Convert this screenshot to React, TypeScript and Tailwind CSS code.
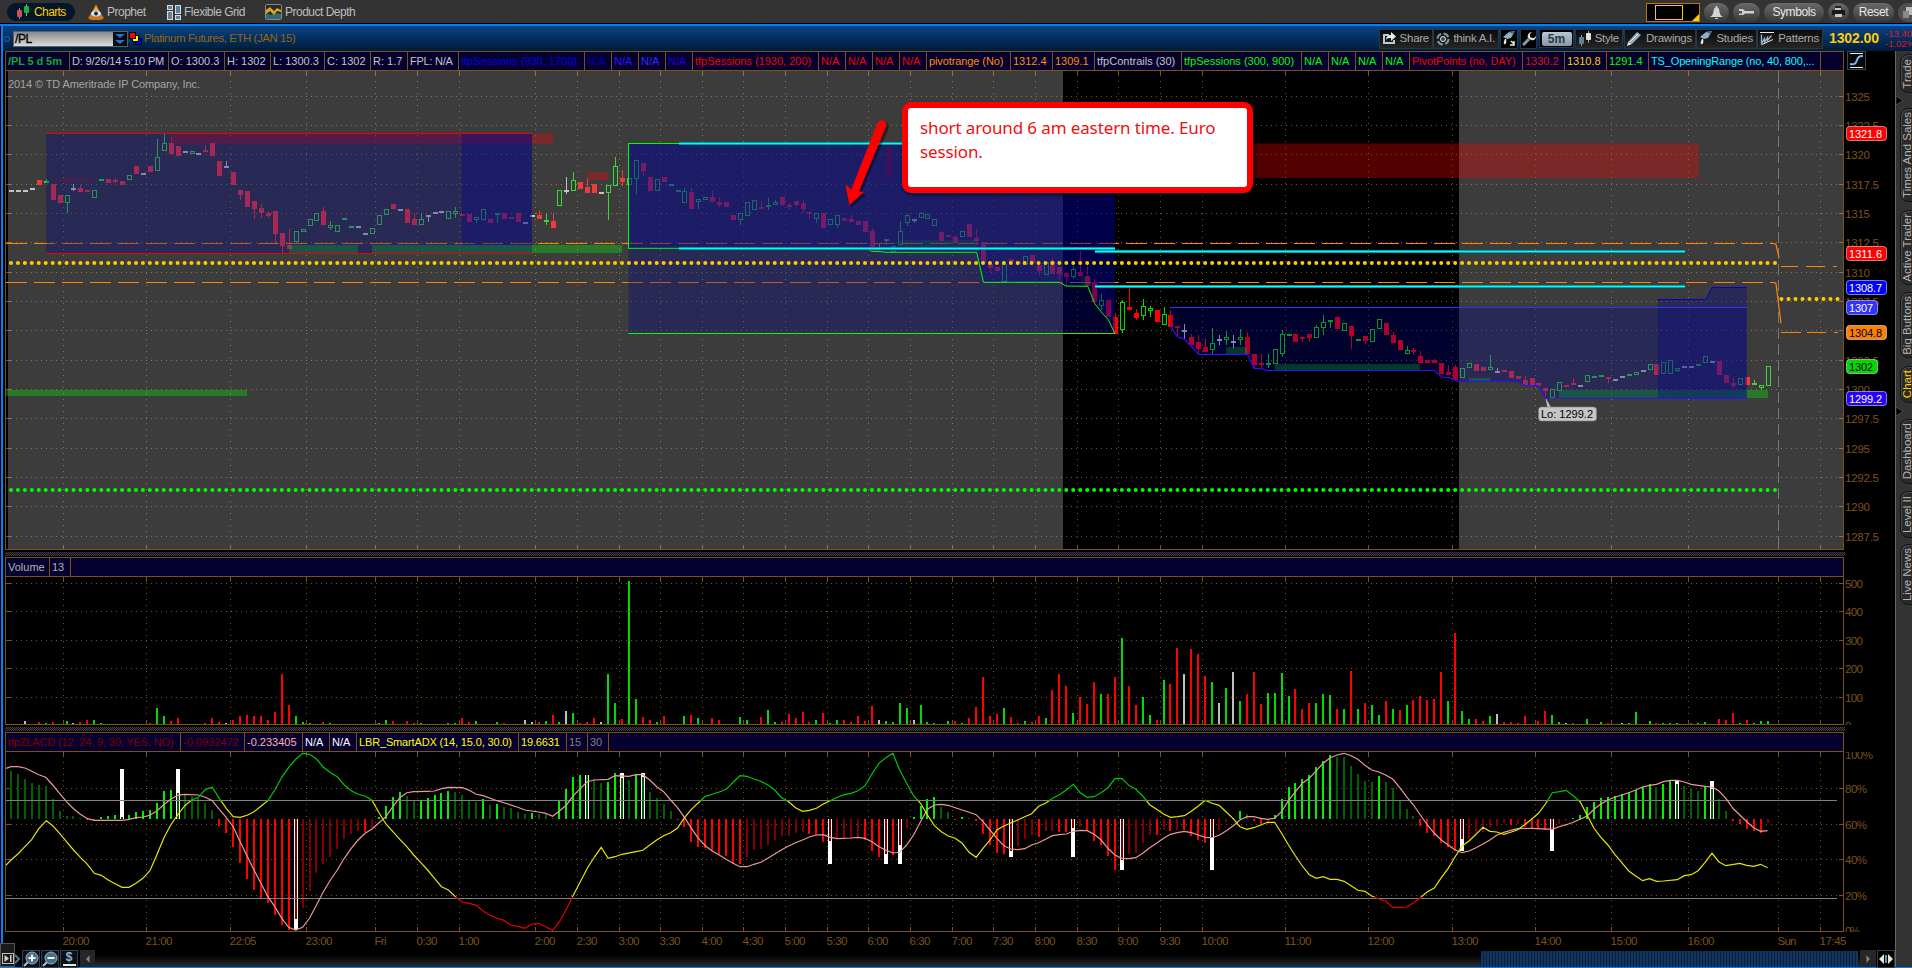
import type { ReactNode } from "react";
import { ChevronLeft, ChevronRight } from "lucide-react";

// ---------------------------------------------------------------------------
// Data. Vertical values are kept in thirds of a pixel.
// ---------------------------------------------------------------------------

// one bar per entry: kind, body top, body bottom, [high], [low]
// kinds: r = down, g = up, n = unchanged
const CANDLES = `n 571 576;n 571 576;n 571 576;n 565 570;r 540 555;g 543 549 536;r 552 600;r 585 609;g 585 609 585 639;n 565 570 552 572;
r 564 576 555;r 570 576;g 570 594;g 538 545;r 538 549;r 540 545 534 549;r 543 555;g 526 540;r 498 522;n 519 524;
r 498 516;g 471 513 417;g 429 452 402;r 429 462 411;r 438 468;n 453 458;g 454 464;n 459 464;r 450 456 434;r 429 468;
r 483 528;n 497 503 483;r 516 555;r 570 585 570 600;r 573 621;r 603 627 603 657;r 624 639 612 654;r 639 648 634 654;r 633 702 633 729;r 699 738 699 760;
r 735 747 687;g 693 726;g 688 696;g 657 678;g 639 663;r 633 675 621;g 676 686 664 690;g 675 696;g 655 660;g 677 682;
n 679 684;n 700 705;g 684 702;g 645 675;g 627 645;r 612 627;n 627 632;r 627 669;r 657 675 639;g 657 675 639;
n 645 650 645 666;n 636 641;n 634 639;g 633 657;g 634 642 621 654;r 642 647;r 642 666;g 651 660 651 669;g 627 660;r 657 668;
g 639 644 639 669;r 639 657;r 651 657;r 639 666;n 666 671;n 645 650;r 645 657 633;g 660 666 642 675;r 663 684 639;g 570 618;
n 570 575 531 582;g 540 573 516;r 546 567;r 561 579 534;r 552 579;n 576 581;g 555 579 555 660;g 498 558 471;r 534 546 510 558;g 534 555;
g 480 537 480 582;r 489 513 489 528;r 531 573;g 537 573;r 531 546;g 553 558;g 570 576;g 573 609 564;r 576 627 564;g 597 606 597 627;
g 591 600;r 591 606 570;r 606 615 591 621;r 606 621;r 645 660;g 639 660 639 675;g 606 648;g 600 630;r 621 627 603;g 615 622 594 630;
g 606 615 600;r 591 615;r 615 621 609 630;r 603 615 603 622;r 609 627 600 639;r 636 642 636 657;g 639 657 639 669;r 639 684;g 657 675;g 645 675 645 684;
r 654 663;r 657 665 645;r 663 675;r 663 696;r 693 747 684;n 745 750 732;g 717 722 717 735;g 738 756;g 693 735 663;g 645 669 642 678;
n 658 663 658 669;g 639 654 636;g 642 657;g 657 678;r 696 723;r 705 711;r 711 729 705;g 693 711;r 672 711;r 714 723 687 735;
r 726 789;r 792 804 792 819;r 801 813;g 792 846;r 777 787;r 783 792;g 768 795;r 765 789;r 795 813 795 825;g 786 825;
r 783 822 774;r 801 822 801 840;r 819 831 819 858;g 807 831 798 837;r 816 828 753;r 828 858 795;r 846 906 837;g 900 918 882 930;r 900 951;r 951 1001 939;
g 906 990 900 999;r 921 930 861;r 939 954 927 960;g 918 948 897 960;g 924 932 918 950;r 930 966;g 942 974 921;r 945 981 930;r 978 984 978 1010;n 991 996 972 1017;
r 1011 1035 1002;r 1026 1047 1005 1060;r 1041 1056 1013;g 1029 1050 984 1062;n 1018 1023 1006 1036;g 1011 1020 994 1035;n 1023 1028 1005 1044;g 1011 1020 987 1035;r 1011 1062 996;r 1062 1095 1062 1105;
r 1089 1096 1062 1105;g 1090 1096 1062 1105;g 1047 1092;g 1002 1062 990 1071;g 1002 1007;r 1002 1026;r 1011 1017 1011 1026;r 1002 1014 1002 1026;g 981 1014 975;g 966 984 945 1005;
g 960 966 960 984;r 951 987;g 969 993;r 978 1008 978 1047;g 1017 1022;r 1008 1023 1008 1032;g 987 1026;g 957 987;r 969 1006;r 1005 1029 996;
r 1020 1050;g 1050 1062 1038;r 1050 1057 1044 1066;r 1068 1089 1053;r 1080 1090;r 1080 1090 1077;r 1089 1122;r 1116 1126 1095;r 1101 1140 1095;g 1104 1134;
g 1090 1104;r 1092 1113;r 1101 1113;g 1101 1111 1065;n 1112 1117 1105 1120;r 1110 1116;r 1113 1134;r 1128 1138;r 1140 1155 1128;r 1134 1155;
r 1149 1158;r 1164 1173 1164 1190;g 1167 1194;g 1147 1173;r 1155 1160;r 1149 1155 1134;n 1155 1160;g 1125 1146;g 1127 1134;g 1125 1132;
r 1130 1135 1130 1150;n 1136 1140;n 1128 1133;g 1123 1130;g 1116 1125;n 1110 1115;g 1093 1112;r 1092 1125;g 1086 1122;g 1080 1123;
g 1104 1112 1104 1116;n 1099 1104;n 1098 1103;g 1092 1099;g 1069 1090;n 1083 1088;r 1083 1125;r 1125 1149;r 1149 1157 1135 1168;g 1134 1155;
r 1131 1155;g 1149 1155 1140;g 1155 1163 1155 1170;g 1098 1157`
  .split(";")
  .map((row) => {
    const [kind, ...v] = row.trim().split(" ");
    const [top, bottom, high = top, low = bottom] = v.map(Number);
    return { kind, top, bottom, high, low };
  });

// bar index + kind + height
const VOLUME = `2n8 4r7 5g4 6r7 8g10 9n4 10r7 11r13 12g13 13g4 20r4 21g49 22g25 23r10 24r19 28r4 29r19 30r7 31n4 32r13 33r25 34r28 35r25 36r25 37r13
38r37 39r151 40r58 41g25 42g7 43g4 45r7 46g4 53g4 54g13 55r10 57r10 58r4 59g4 63g4 64g4 65r19 66r7 67g10 70g7 71r4 74n13 75n7 76r7 77g10 78r28
79g7 80n40 81g34 82r4 83r7 84r19 85n7 86g151 87g64 88r16 89g430 90g76 91r22 92r13 93g7 94r25 97g25 98r28 99g19 101r19 102r13 105g22 106g13
108r22 109g43 110g7 111r7 112r31 113r19 114r37 115r7 116g13 117r34 118g4 119g13 120r13 121r7 122r25 123r10 124r55 125n13 126g10 127g7 128g64
129g49 130n13 131g58 132g7 133g4 135g10 136r10 137g4 138r19 139r52 140r142 141r25 142r31 143g49 144r22 145r4 146g10 147r7 148r25 149g19
150r103 151r151 152r115 153g34 154r82 155r61 156r127 157g91 158r91 159r142 160g259 161r115 162r58 163g82 164g28 165r13 166g133 167r121
168r229 169n151 170r226 171r211 172r145 173g127 174n64 175g109 176n157 177g70 178r91 179r157 180r61 181g94 182g94 183g154 184g85 185r106
186r46 187r64 188g64 189g91 190g88 191r46 192g46 193r160 194g46 195r64 196g58 197g28 198r70 199g46 200r43 201g58 202r73 203r85 204r73 205r76
206r157 207g70 208r274 209g40 210g16 211r16 212r10 213g25 214n31 215r7 216r7 217r4 218r25 220r10 221r40 222g28 223g7 224n4 225r4 227g16
229g7 230r4 232n4 233g4 234g37 236g10 237r4 238g4 239g4 240g4 242r4 243g4 244g7 246r16 247r13 248r34 249g4 250r13 251g4 252g10 253g10`
  .split(/\s+/)
  .map((s) => {
    const m = s.match(/(\d+)([rgn])(\d+)/)!;
    return { i: +m[1], kind: m[2], h: +m[3] };
  });

const HIST = [
  144, 135, 120, 108, 102, 99, 60, 24, 9, 8, 2, -3, -6, 6, 9, 12, 6, 12, 21, 24, 27, 48, 84, 87, 78, 72, 70, 64, 48, 27,
  -21, -42, -84, -132, -180, -213, -237, -252, -288, -318, -333, -300, -267, -216, -162, -135, -114, -90, -60, -45, -36,
  -38, -27, 5, 39, 66, 81, 69, 54, 56, 63, 72, 78, 84, 81, 72, 54, 51, 60, 42, 45, 36, 33, 21, 15, 18, 15, 14, 2, 54, 90,
  126, 132, 131, 120, 108, 111, 138, 123, 117, 135, 126, 81, 63, 45, 24, -3, -24, -69, -84, -87, -96, -105, -110, -135,
  -136, -114, -93, -90, -78, -63, -51, -50, -42, -39, -44, -48, -69, -66, -60, -57, -56, -55, -63, -96, -114, -105, -108,
  -78, -27, 6, 39, 60, 66, 36, 21, -3, 6, 3, -6, -45, -78, -102, -105, -96, -81, -60, -48, -54, -36, -35, -38, -39, -27,
  -24, -36, -66, -78, -111, -153, -123, -105, -102, -72, -48, -49, -33, -36, -33, -34, -51, -63, -72, -57, -33, -9, 3, 24,
  15, -6, -16, -15, 12, 60, 96, 108, 120, 132, 156, 174, 192, 187, 186, 159, 135, 114, 111, 129, 111, 93, 57, 30, 9, -21,
  -42, -51, -72, -84, -96, -60, -59, -42, -40, -24, -21, -12, -18, -15, -24, -27, -29, -32, -30, -15, -6, 3, 12, 36, 51,
  63, 66, 69, 75, 81, 87, 96, 105, 96, 105, 114, 105, 99, 93, 84, 96, 90, 60, 24, -6, -15, -30, -36, -42, -12,
];

// white marker bars behind the histogram
const MARKERS: [number, number][] = [
  [16, 150], [24, 150], [41, -333], [83, 132], [88, 138], [91, 138], [118, -135], [126, -135], [128, -135],
  [144, -114], [153, -114], [160, -153], [173, -153], [209, -96], [222, -96], [240, 114], [245, 114],
];

const SIGNAL = `-0.8 716 0 710 1 710 2 714 3 724 4 734 5 742 6 765 7 790 8 815 9 836 10 853 11 866 12 871 16 871 17 868 18 863 19 861 20 856 21 843 22 824 23 808 24 796 25 793 27 795 28 802 29 812 30 838 31 862 32 890 33 935 34 978 35 1020 36 1060 37 1100 38 1130 39 1165 40 1192 41 1200 42 1192 43 1165 44 1125 45 1085 46 1050 47 1020 48 985 49 955 50 930 51 910 52 897 53 878 54 860 55 830 56 803 57 788 58 785 60 784 61 783 62 776 63 772 65 773 66 781 67 793 68 797 70 812 71 818 73 832 74 840 76 846 77 850 78 859 79 843 80 825 81 797 82 775 83 755 84 750 86 748 87 737 89 739 90 734 91 734 92 750 93 770 94 785 95 810 96 833 97 862 98 895 99 925 100 947 101 963 102 975 103 988 104 1000 105 1010 106 1010 107 1003 108 997 109 985 110 972 111 959 112 948 113 938 114 930 115 921 116 915 117 914 118 922 119 926 121 924 122 922 123 925 124 935 125 950 126 960 127 969 128 967 129 945 130 915 131 875 132 838 133 825 134 823 135 826 136 833 137 840 138 847 139 854 140 875 141 900 142 925 143 947 144 957 145 959 146 956 147 945 148 938 149 928 150 917 151 914 152 912 153 904 154 901 155 902 156 913 157 930 158 955 159 975 160 985 161 986 162 983 163 970 164 953 165 940 166 925 167 913 168 908 169 904 170 908 171 915 172 922 173 923 174 916 175 903 176 888 177 870 178 860 179 860 180 865 181 868 182 865 183 845 184 812 185 785 186 760 187 745 188 722 189 700 190 683 191 675 192 670 193 677 194 688 195 706 196 720 197 726 198 735 199 747 200 772 201 800 202 825 203 855 204 885 205 910 206 930 207 945 208 960 209 968 210 963 211 953 212 942 213 930 214 916 215 907 216 901 217 896 219 895 222 898 223 890 224 884 225 877 226 868 227 858 228 838 229 822 230 810 231 802 233 788 234 780 235 771 236 766 237 763 238 755 239 751 240 751 241 756 242 763 243 766 244 769 245 771 246 783 247 805 248 835 249 855 250 875 251 893 252 904 253 902`;

const ADX = `-0.8 1007 0 990 1 972 2 950 3 928 4 896 5.1 872 6 887 7 910 8 935 9 960 10 982 11 1003 12 1030 13 1036 14 1050 15 1061 16 1072 17 1072 18 1060 19 1045 20 1022 21 975 22 925 23 885 24 855 25 828 26 810 27 802 28 778 29 772 30 805 31 835 32 860 33 862 34 856 35 845 36 829 37 812 38 780 39 742 40 712 41 688 42 670 43 673 44 687 45 712 46 728 47 740 48 765 49 782 50 793 51 798 52 811 53 848 54 882 55 905 56 928 57 950 58 975 59 997 60 1020 61 1045 62 1070 63 1080 64 1100 65 1117 66 1120 67 1126 68 1143 69 1156 70 1165 71 1171 72 1186 73 1189 74 1195 75 1183 76 1180 77 1190 78 1201 79 1175 80 1138 81 1095 82 1055 83 1015 84 982 85 952 86 985 87 980 88 973 90 965 91 961 92 945 93 930 94 917 95 908 96 894 97 863 98 838 99 818 100 799 101 793 102 786 103 778 104 757 105 737 106 739 107 747 108 754 109 765 110 780 111 803 112 815 113 833 114 844 115 841 116 835 117 822 118 812 119 802 120 794 121 790 122 782 123 767 124 732 125 700 126 683 127 670 128 720 129 760 130 797 131 820 132 855 133 887 134 905 135 918 136 925 137 940 138 967 139 982 140 955 141 930 142 900 143 888 144 879 145 870 146 860 147 851 148 829 149 820 150 805 151 794 152 780 153 763 154 788 155 802 156 800 157 788 158 773 159 746 160 745 161 766 162 778 163 798 164 824 165 838 166 852 167 862 168 860 169 857 170 844 171 828 172 811 173 820 174 826 175 845 176 865 177 890 178 898 179 893 180 885 181 877 182 877 183 910 184 945 185 978 186 1008 187 1034 188 1045 189 1040 190 1048 191 1048 192 1054 193 1067 194 1081 195 1084 196 1098 197 1107 198 1113 199 1132 200 1132 201 1131 202 1118 203 1103 204 1085 205 1074 206 1043 207 1015 208 980 209 948 210 933 211 913 212 892 213 904 214 906 215 913 216 907 217 899 218 884 219 868 220 850 221 822 222 788 223 785 224 781 225 797 226 815 227 855 228 895 229 922 230 945 231 973 232 998 233 1023 234 1038 235 1052 236 1046 237 1054 238 1053 240 1049 241 1037 242 1034 243 1022 244 997 245 970 246 996 247 1007 249 1000 250 1006 251 1009 252 1003 253 1013`;

const TIMES: [number, string][] = [
  [63, "20:00"], [146, "21:00"], [230, "22:05"], [306, "23:00"], [375, "Fri"], [417, "0:30"], [459, "1:00"],
  [535, "2:00"], [577, "2:30"], [619, "3:00"], [660, "3:30"], [702, "4:00"], [743, "4:30"], [785, "5:00"],
  [827, "5:30"], [868, "6:00"], [910, "6:30"], [952, "7:00"], [993, "7:30"], [1035, "8:00"], [1077, "8:30"],
  [1118, "9:00"], [1160, "9:30"], [1202, "10:00"], [1285, "11:00"], [1368, "12:00"], [1452, "13:00"],
  [1535, "14:00"], [1611, "15:00"], [1688, "16:00"], [1778, "Sun"], [1820, "17:45"],
];

const PRICES: [number, string][] = [
  [96, "1325"], [125, "1322.5"], [154, "1320"], [184, "1317.5"], [213, "1315"], [242, "1312.5"], [272, "1310"],
  [301, "1307.5"], [330, "1305"], [360, "1302.5"], [389, "1300"], [418, "1297.5"], [448, "1295"], [477, "1292.5"],
  [506, "1290"], [536, "1287.5"],
];

const BROWN = "#7d5219";
const KIND: Record<string, string> = { r: "#ff0000", g: "#00dc00", n: "#c0c0c0" };
const barX = (i: number) => 11 + 6.943 * i;

const toPoints = (s: string) => {
  const n = s.split(" ").map(Number);
  const out: string[] = [];
  for (let k = 0; k < n.length; k += 2) out.push(`${barX(n[k]).toFixed(1)},${(530 + n[k + 1] / 3).toFixed(1)}`);
  return out.join(" ");
};

// ---------------------------------------------------------------------------
// Charts
// ---------------------------------------------------------------------------

function Grid({ top, bottom, rows, sunday }: { top: number; bottom: number; rows: number[]; sunday?: boolean }) {
  return (
    <g shapeRendering="crispEdges" stroke={BROWN} fill="none">
      {rows.map((y) => (
        <g key={y}>
          <path d={`M6 ${y + 0.5}H1838`} strokeDasharray="1 4" />
          <path d={`M6 ${y + 0.5}h5M1839 ${y + 0.5}h4`} />
        </g>
      ))}
      {TIMES.map(([x]) => (
        <g key={x}>
          {!(sunday && x === 1778) && <path d={`M${x + 0.5} ${top + 10}V${bottom - 6}`} strokeDasharray="1 5" />}
          <path d={`M${x + 0.5} ${top}v5M${x + 0.5} ${bottom}v-4`} />
        </g>
      ))}
    </g>
  );
}

function Frame({ top, bottom }: { top: number; bottom: number }) {
  return (
    <path d={`M5.5 ${top}V${bottom + 0.5}H1843.5V${top}`} stroke={BROWN} fill="none" shapeRendering="crispEdges" />
  );
}

function PriceTag({ y, text, fill, color = "#fff" }: { y: number; text: string; fill: string; color?: string }) {
  const w = text.length > 4 ? 40 : 31;
  return (
    <g>
      <rect x="1846.5" y={y - 7} width={w} height="14" rx="3" fill={fill} stroke="#ffffff" strokeOpacity=".5" />
      <text x="1849" y={y + 4} fill={color} textLength={w - 7} fontSize="11">
        {text}
      </text>
    </g>
  );
}

const CONTOUR_A =
  "628,248.3 867,248.3 871.5,251.3 881,251.7 886,252.3 976.7,252.3 983.5,282.3 1059.6,282.3 1066,286 1087.8,286.3 1094.6,303.3 1101.3,312 1108.5,320 1114.8,333.3";
const CONTOUR_B =
  "1170.3,326 1177.4,336.7 1184.4,339 1198.6,354.3 1247.5,354.3 1254,368.3 1261,368.7 1267.6,370.5 1434.4,370.5 1441.4,377 1449,377.7 1457.7,381.5 1517.5,381.5 1524.6,385.3 1538.2,385.7 1545.2,398 1746.8,398.5";

function PriceChart() {
  const blue = "rgba(0,0,146,.3)";
  return (
    <svg className="block" width="1892" height="479" viewBox="3 71 1892 479" fontFamily="Liberation Sans, Arial, sans-serif">
      <rect x="3" y="71" width="1892" height="479" fill="#000" />
      <Grid top={71} bottom={549} rows={PRICES.map((p) => p[0])} sunday />
      <path d="M1778.5 72V549" stroke="#565656" strokeDasharray="11 5" shapeRendering="crispEdges" />

      <g shapeRendering="crispEdges">
        {CANDLES.map((c, i) => {
          const x = Math.round(barX(i));
          const top = Math.round(c.top / 3);
          const h = Math.max(2, Math.round((c.bottom - c.top) / 3));
          const color = KIND[c.kind];
          const hollow = c.kind === "g" && h > 2;
          return (
            <g key={i}>
              {c.high < c.top && <rect x={x} y={c.high / 3} width="1" height={top - c.high / 3} fill={color} />}
              {c.low > c.bottom && <rect x={x} y={top + h} width="1" height={c.low / 3 - top - h} fill={color} />}
              {hollow ? (
                <rect x={x - 1.5} y={top + 0.5} width="4" height={h - 1} fill="none" stroke={color} />
              ) : (
                <rect x={x - 2} y={top} width="5" height={h} fill={color} />
              )}
            </g>
          );
        })}
      </g>

      {/* extended hours shading */}
      <g fill="rgba(200,200,200,.3)" shapeRendering="crispEdges">
        <rect x="8" y="71" width="1055" height="479" />
        <rect x="1459" y="71" width="385" height="479" />
      </g>

      {/* supply and demand zones */}
      <g fill="rgba(255,0,0,.32)">
        <rect x="171" y="133.5" width="382" height="10" />
        <rect x="53" y="179" width="41" height="2" />
        <rect x="587" y="172" width="21" height="8" />
        <rect x="886" y="145" width="6" height="33" />
        <rect x="1000" y="143.5" width="698.5" height="34.5" />
      </g>
      <g fill="rgba(0,255,0,.32)">
        <rect x="289" y="245" width="69" height="8" />
        <rect x="372" y="245" width="250" height="8" />
        <rect x="899" y="240" width="78" height="8" fillOpacity=".6" />
        <rect x="1081" y="276" width="10" height="10" fillOpacity=".6" />
        <rect x="1226" y="347" width="21" height="7" />
        <rect x="1275" y="364" width="145" height="6" />
        <rect x="1469" y="378" width="21" height="3" />
        <rect x="1559" y="390" width="209" height="8" />
        <rect x="6" y="390" width="241" height="6" />
      </g>

      <g fill="none" stroke="#ff8400" strokeWidth="1.2">
        <path d="M6 243.5H1775M6 282.5H1775" strokeDasharray="21 7" />
        <path d="M1774 243.5l2 1l3 13M1774 282.5l2 1l5 40M1781 266.5h17m8 0h19m8 0h4M1781 332.5h20m6 0h19m8 0h4" />
      </g>

      {/* session boxes */}
      <g fill={blue}>
        <rect x="46" y="133.5" width="486" height="120" />
        <rect x="462" y="134" width="70" height="111" />
        <rect x="628.5" y="143.5" width="486.5" height="190" />
        <polygon points={`628,143.5 ${CONTOUR_A} 1114.8,143.5`} />
        <polygon points={`1170.3,307.5 ${CONTOUR_B} 1746.8,307.5`} />
        <polygon points="1657.7,299.3 1706,299.3 1711.9,287.3 1746.8,287.3 1746.8,398 1657.7,398" />
      </g>
      <path d="M46 133.5H532M46 253.5H532" stroke="#f00000" shapeRendering="crispEdges" />
      <g fill="none" stroke="#00ff00">
        <path d="M680 143.5H628.5V248.5" />
        <path d="M628.5 333.5H1115" />
        <polyline points={CONTOUR_A} />
      </g>
      <g fill="none">
        <path d="M1170 307.5H1746.8" stroke="#3232ff" />
        <polyline points={CONTOUR_B} stroke="#2a10ff" strokeWidth="1.2" />
        <polyline points="1657.7,299.5 1706,299.5 1711.9,287.5 1746.8,287.5" stroke="#0000d0" />
      </g>
      <g fill="none" shapeRendering="crispEdges">
        <path d="M679 143.5H1000M679 248.5H1115M1095 251.5H1684.5M1095 286.5H1684.5" stroke="#00a0a8" strokeWidth="3" />
        <path d="M679 143.5H1000M679 248.5H1115M1095 251.5H1684.5M1095 286.5H1684.5" stroke="#00ffff" />
      </g>

      {CANDLES.map((_, i) => (
        <g key={i}>
          <ellipse cx={barX(i)} cy="263" rx="2" ry="2.1" fill="#ffcc00" />
          <ellipse cx={barX(i)} cy="490" rx="2" ry="2.1" fill="#00ff00" />
        </g>
      ))}
      <circle cx="1775" cy="263" r="2" fill="#ffcc00" />
      <circle cx="1775" cy="490" r="2" fill="#00ff00" />
      {[0, 1, 2, 3, 4, 5, 6, 7, 8].map((i) => (
        <circle key={i} cx={1781.5 + i * 7} cy="299" r="2" fill="#ffcc00" />
      ))}
      <Frame top={71} bottom={549} />
      <text x="8" y="87.5" fill="#a4a4a4" fontSize="11" textLength="192">
        2014 © TD Ameritrade IP Company, Inc.
      </text>

      {PRICES.map(([y, t]) => (
        <text key={t} x="1845" y={y + 5} fill={BROWN} fontSize="11.5" textLength={t.length > 4 ? 34 : 25}>
          {t}
        </text>
      ))}
      <PriceTag y={133.5} text="1321.8" fill="#ff0000" />
      <PriceTag y={253.5} text="1311.6" fill="#ff0000" />
      <PriceTag y={287.5} text="1308.7" fill="#0000ff" />
      <PriceTag y={307.5} text="1307" fill="#3232ff" />
      <PriceTag y={332.5} text="1304.8" fill="#ff8000" color="#000" />
      <PriceTag y={366.5} text="1302" fill="#00d800" color="#000" />
      <PriceTag y={398.5} text="1299.2" fill="#2800ff" />

      {/* low bubble */}
      <path d="M1546 399l4.5 8h-3z" fill="#c4c4c4" stroke="#c4c4c4" strokeWidth=".5" />
      <rect x="1538.5" y="407" width="58" height="14" rx="3" fill="#c6c6c6" stroke="#808080" strokeWidth=".6" />
      <text x="1541" y="418" fontSize="11" fill="#000" textLength="52">
        Lo: 1299.2
      </text>

      {/* arrow */}
      <path
        d="M878 123q3-5 8 -1q1.500 2 .5 5L859 191.500l5 1l-14.500 13l-4-19.500l6 5z"
        fill="#000"
        opacity=".4"
        transform="translate(2 2)"
      />
      <path d="M877.500 123q3-4.500 7.500 -1.500q2 2 1 5L859 191.500l5 .500l-14.500 13l-4-19.500q3 0 5.500 4.500z" fill="#ff0000" />
    </svg>
  );
}

function VolumeChart() {
  return (
    <svg className="block" width="1892" height="148" viewBox="3 577 1892 148" fontFamily="Liberation Sans, Arial, sans-serif">
      <Grid top={577} bottom={724} rows={[583, 611, 640, 668, 697]} />
      <g shapeRendering="crispEdges">
        {VOLUME.map(({ i, kind, h }) => (
          <rect key={i} x={Math.round(barX(i)) - 1} y={724 - Math.round(h / 3)} width="2" height={Math.round(h / 3)} fill={KIND[kind]} />
        ))}
      </g>
      <Frame top={577} bottom={724} />
      {[500, 400, 300, 200, 100, 0].map((v, k) => (
        <text key={v} x="1845" y={[588, 616, 645, 673, 702, 730][k]} fill={BROWN} fontSize="11.5" textLength={v ? 18 : 6}>
          {v}
        </text>
      ))}
    </svg>
  );
}

function OscillatorChart() {
  const zero = 819;
  const adx = toPoints(ADX);
  return (
    <svg className="block" width="1892" height="198" viewBox="3 752 1892 198" fontFamily="Liberation Sans, Arial, sans-serif">
      <defs>
        <clipPath id="hi"><rect x="6" y="752" width="1837" height="49" /></clipPath>
        <clipPath id="mid"><rect x="6" y="801" width="1837" height="96" /></clipPath>
        <clipPath id="lo"><rect x="6" y="897" width="1837" height="34" /></clipPath>
        <clipPath id="all"><rect x="6" y="752" width="1890" height="180" /></clipPath>
      </defs>
      <Grid top={752} bottom={931} rows={[788, 824, 859, 895]} />
      <g shapeRendering="crispEdges">
        {MARKERS.map(([i, v]) => (
          <rect key={i} x={Math.round(barX(i)) - 2} y={v > 0 ? zero - v / 3 : zero} width="4" height={Math.abs(v) / 3} fill="#fff" />
        ))}
        {HIST.map((v, i) => {
          const prev = i ? HIST[i - 1] : 999;
          const fill = v > 0 ? (v > prev ? "#00f000" : "#005f00") : v < prev ? "#ff0000" : "#800000";
          const marked = MARKERS.some((m) => m[0] === i);
          const h = Math.max(1, Math.round(Math.abs(v) / 3));
          return (
            <rect key={i} x={Math.round(barX(i)) - 1} y={v > 0 ? zero - h : zero} width={marked ? 1.6 : 2} height={h} fill={fill} />
          );
        })}
        <path d="M6 800.5H1837M6 898.5H1837" stroke="#808080" />
      </g>
      <g fill="none" strokeWidth="1.2">
        <polyline points={toPoints(SIGNAL)} stroke="#e89a98" clipPath="url(#all)" />
        <polyline points={adx} stroke="#00c800" clipPath="url(#hi)" />
        <polyline points={adx} stroke="#e6e600" clipPath="url(#mid)" />
        <polyline points={adx} stroke="#e60000" clipPath="url(#lo)" />
      </g>
      <Frame top={752} bottom={931} />
      <g fill={BROWN} fontSize="11.5" clipPath="url(#all)">
        <text x="1845" y="758.500" textLength="28">100%</text>
        <text x="1845" y="793" textLength="22">80%</text>
        <text x="1845" y="829" textLength="22">60%</text>
        <text x="1845" y="864" textLength="22">40%</text>
        <text x="1845" y="900" textLength="22">20%</text>
        <text x="1845" y="935" textLength="15">0%</text>
      </g>
      {TIMES.map(([x, t]) => (
        <text key={x} x={x - 0.5} y="945" fill={BROWN} fontSize="11.5" textLength={t.length > 4 ? 27 : t === "Fri" ? 12 : t === "Sun" ? 19 : 21}>
          {t}
        </text>
      ))}
    </svg>
  );
}

// ---------------------------------------------------------------------------
// Chrome
// ---------------------------------------------------------------------------

type CellData = [width: number, text: string, color: string, extra?: string];

const STATUS: CellData[] = [
  [64, "/PL 5 d 5m", "text-[#12a838]", "font-bold tracking-[-0.1px]"],
  [99, "D: 9/26/14 5:10 PM", "text-[#c4c4c4]", "tracking-[-0.15px]"],
  [56, "O: 1300.3", "text-[#c4c4c4]"],
  [46, "H: 1302", "text-[#c4c4c4]"],
  [54, "L: 1300.3", "text-[#c4c4c4]"],
  [46, "C: 1302", "text-[#c4c4c4]"],
  [37, "R: 1.7", "text-[#c4c4c4]"],
  [51, "FPL: N/A", "text-[#c4c4c4]", "tracking-[-0.25px]"],
  [126, "tfpSessions (930, 1700)", "text-[#0000e6]"],
  [27, "N/A", "text-[#0000b4]"],
  [27, "N/A", "text-[#2c10ff]"],
  [27, "N/A", "text-[#2c2cff]"],
  [27, "N/A", "text-[#2000d0]"],
  [126, "tfpSessions (1930, 200)", "text-[#f00000]"],
  [27, "N/A", "text-[#f00000]"],
  [27, "N/A", "text-[#f00000]"],
  [27, "N/A", "text-[#f00000]"],
  [27, "N/A", "text-[#f00000]"],
  [84, "pivotrange (No)", "text-[#ff8c10]", "tracking-[-0.1px]"],
  [42, "1312.4", "text-[#ff8c10]"],
  [42, "1309.1", "text-[#ff8c10]"],
  [87, "tfpContrails (30)", "text-[#c4c4c4]"],
  [120, "tfpSessions (300, 900)", "text-[#00ff00]"],
  [27, "N/A", "text-[#00ff00]"],
  [27, "N/A", "text-[#00ff00]"],
  [27, "N/A", "text-[#00ff00]"],
  [27, "N/A", "text-[#00ff00]"],
  [113, "PivotPoints (no, DAY)", "text-[#f00000]", "tracking-[-0.1px]"],
  [42, "1330.2", "text-[#e01010]"],
  [42, "1310.8", "text-[#ffcc00]"],
  [42, "1291.4", "text-[#00ff00]"],
  [172, "TS_OpeningRange (no, 40, 800,...", "text-[#00ffff]", "tracking-[-0.15px]"],
];

const OSC: CellData[] = [
  [175, "tfpZLACD (12, 24, 9, 30, YES, NO)", "text-[#7d0000]", "tracking-[-0.15px]"],
  [64, "-0.0932472", "text-[#7d0000]"],
  [58, "-0.233405", "text-[#ffb4b0]"],
  [27, "N/A", "text-white"],
  [27, "N/A", "text-white"],
  [162, "LBR_SmartADX (14, 15.0, 30.0)", "text-[#ffff00]", "tracking-[-0.15px]"],
  [48, "19.6631", "text-[#ffff00]", "tracking-[-0.15px]"],
  [21, "15", "text-[#808080]"],
  [21, "30", "text-[#808080]"],
];

function CellRow({ cells }: { cells: CellData[] }) {
  return (
    <div className="ml-[2px] flex h-[20px] w-[1839px] shrink-0 border border-[#7d5219] bg-[#06002e] text-[11px]">
      {cells.map(([w, text, color, extra = ""], i) => (
        <div
          key={i}
          style={{ width: w }}
          className={`flex shrink-0 items-center overflow-hidden whitespace-nowrap border-r border-[#7d5219] pl-[2px] ${color} ${extra}`}
        >
          {text}
        </div>
      ))}
    </div>
  );
}

function Splitter() {
  return (
    <div className="flex h-[7px] shrink-0 items-center pl-[2px]">
      <div className="h-[4px] w-[1840px] bg-[repeating-conic-gradient(#444_0_25%,#0c0c0c_0_50%)] [background-size:2px_2px]" />
    </div>
  );
}

function CandleIcon({ a, b }: { a: string; b: string }) {
  return (
    <svg className="shrink-0" width="14" height="16" viewBox="0 0 14 16">
      <path d="M3.500 4v11M10.500 0v12" stroke="#999" />
      <rect x="1" y="6" width="5" height="7" rx="1" fill={a} />
      <rect x="8" y="2" width="5" height="7" rx="1" fill={b} />
    </svg>
  );
}

function TopTab({ icon, label }: { icon: ReactNode; label: string }) {
  return (
    <div className="flex items-center gap-[3px] whitespace-nowrap text-[12px] tracking-[-0.5px] text-[#bdbdbd]">
      {icon}
      {label}
    </div>
  );
}

function TopBar() {
  const pill = "flex h-[19px] items-center justify-center rounded-full bg-gradient-to-b from-[#6a6a6a] to-[#3a3a3a]";
  return (
    <header className="flex h-[24px] shrink-0 items-center border-b border-black bg-[#333] pt-px">
      <div className="ml-[7px] flex h-[18px] w-[68px] items-center gap-[4px] rounded-full bg-[#04162a] pl-[9px] text-[12px] tracking-[-0.6px] text-[#ffcc00]">
        <CandleIcon a="#d05050" b="#20b040" />
        Charts
      </div>
      <div className="ml-[13px] w-[79px]">
        <TopTab
          label="Prophet"
          icon={
            <svg width="16" height="16" viewBox="0 0 16 16">
              <path d="M8 0l4 8 4 6-3 2H3l-3-2 4-6z" fill="#c87818" />
              <path d="M8 2l3 6H5z" fill="#f0b040" />
              <ellipse cx="8" cy="9.500" rx="5" ry="3" fill="#e8e8e8" />
              <circle cx="8" cy="9.500" r="2.200" fill="#3060a0" />
              <circle cx="8" cy="9.500" r="1" fill="#000" />
            </svg>
          }
        />
      </div>
      <div className="w-[98px]">
        <TopTab
          label="Flexible Grid"
          icon={
            <svg width="14" height="15" viewBox="0 0 14 15">
              <g fill="#5f8098" stroke="#d4dde4">
                <rect x=".5" y=".5" width="5" height="4" />
                <rect x=".5" y="6.500" width="5" height="8" />
                <rect x="8.500" y=".5" width="5" height="8" />
                <rect x="8.500" y="10.500" width="5" height="4" />
              </g>
            </svg>
          }
        />
      </div>
      <TopTab
        label="Product Depth"
        icon={
          <svg width="17" height="16" viewBox="0 0 17 16">
            <rect x=".5" y=".5" width="16" height="15" rx="1.500" fill="#2a2820" stroke="#888" />
            <path d="M1 9l5 2 5-2 5 1v5H1z" fill="#306878" />
            <path d="M1 6l4-3 4 4 3-3 4 2v2l-4-1-3 4-4-4-4 3z" fill="#d8a818" />
          </svg>
        }
      />
      <div className="ml-auto flex items-center">
        <div className="mr-[4px] flex h-[19px] w-[54px] items-center border border-[#b8780c] bg-black pl-[8px]">
          <div className="h-[15px] w-[28px] border border-[#ffcc00]" />
          <svg className="ml-auto self-end" width="7" height="7" viewBox="0 0 7 7"><path d="M7 0v7H0z" fill="#ffcc00" /></svg>
        </div>
        <div className={`${pill} mr-[4px] w-[25px]`}>
          <svg width="15" height="15" viewBox="0 0 15 15">
            <path d="M7.500 1c-1 0-1 1-1 1.500C4 3.500 5 8 3 10.500L1 12h13l-2-1.500C10 8 11 3.500 8.500 2.500c0-.5 0-1.500-1-1.500zM6 13h3v1H6z" fill="#d4d4d4" />
          </svg>
        </div>
        <div className={`${pill} mr-[4px] w-[27px]`}>
          <svg width="17" height="10" viewBox="0 0 17 10">
            <path d="M1 2h4l2 2h9v2.500H7L5 8H1V6.500h3V4H1z" fill="#d0d0d0" />
          </svg>
        </div>
        <div className={`${pill} mr-[4px] w-[60px] text-[12px] tracking-[-0.4px] text-[#e8e8e8]`}>Symbols</div>
        <div className={`${pill} mr-[4px] w-[21px]`}>
          <svg width="13" height="12" viewBox="0 0 13 12">
            <path d="M3 0h6l1 4H3z" fill="#222" />
            <path d="M0 4h13v5H0z" fill="#1a1a1a" />
            <path d="M3 2h6v2H3zM3 8h7v3H3z" fill="#c8c8c8" />
          </svg>
        </div>
        <div className={`${pill} mr-[4px] w-[41px] text-[12px] tracking-[-0.4px] text-[#e8e8e8]`}>Reset</div>
        <div className="flex h-[19px] w-[14px] items-center rounded-l-full bg-[#505050] pl-[5px]">
          <svg width="9" height="11" viewBox="0 0 9 11"><path d="M3 0h6v8H3z" fill="#bbb" /><path d="M0 4h6v7H0z" fill="#888" /></svg>
        </div>
      </div>
    </header>
  );
}

function ToolButton({ width, icon, label }: { width: string; icon: ReactNode; label?: string }) {
  return (
    <div className={`flex h-[20px] items-center justify-between whitespace-nowrap border border-[#243848] bg-gradient-to-b from-[#0c0c0c] to-[#262626] pl-[2px] text-[11.5px] tracking-[-0.25px] text-[#a8a8a8] ${width}`}>
      {icon}
      {label && <span className="pr-[3px]">{label}</span>}
    </div>
  );
}

const Dropper = ({ arrow = false }: { arrow?: boolean }) => (
  <svg width="14" height="16" viewBox="0 0 14 16">
    <path d="M1 6L7 1l6-1-4 7-4 1z" fill="#8fb0c4" />
    <path d="M7 1l6-1-2 3z" fill="#456880" />
    <path d="M3 8c-4 7 3 7 1 0z" fill="#e8f0d8" />
    {arrow && <path d="M9 10l3 3m0-3v4H8" stroke="#e8f0d8" strokeWidth="1.500" fill="none" />}
  </svg>
);

function TitleBar() {
  return (
    <div className="flex h-[25px] shrink-0 items-center bg-gradient-to-b from-[#0b4484] to-[#001c3c]">
      <div className="ml-px size-[6px] rounded-full border border-[#2060b0]" />
      <div className="ml-[3px] flex h-[16px] w-[115px] border border-[#5a6068] bg-gradient-to-b from-[#8a8a8a] to-[#dcdcdc] text-[12px] leading-[15px] text-black">
        <span className="flex-1 pl-px tracking-[-0.4px] [-webkit-text-stroke:0.3px_black]">/PL</span>
        <span className="flex w-[14px] items-center justify-center bg-[#080c14]">
          <svg width="10" height="12" viewBox="0 0 10 12"><path d="M0 1h10L5 5zM0 7h10l-5 4z" fill="#2870c8" /></svg>
        </span>
      </div>
      <svg className="ml-[1px]" width="13" height="13" viewBox="0 0 13 13">
        <g stroke="#000">
          <rect x="6.500" y="6.500" width="6" height="6" fill="#0000ff" />
          <rect x="3.500" y="3.500" width="6" height="6" fill="#ffff00" />
          <rect x=".5" y=".5" width="6" height="6" fill="#ff0000" />
        </g>
      </svg>
      <span className="ml-[2px] whitespace-nowrap pt-px text-[11.5px] tracking-[-0.45px] text-[#96650e]">Platinum Futures, ETH (JAN 15)</span>

      <div className="ml-auto flex items-center">
        <ToolButton
          width="w-[54px]"
          label="Share"
          icon={
            <svg width="14" height="13" viewBox="0 0 14 13">
              <path d="M1 2h6v2H3v6h8V8h2v4H1z" fill="#b8ccd8" />
              <path d="M4 8c0-4 3-5 5-5V0l5 4.500L9 9V6C7 6 5 6 4 8z" fill="#e8f0e0" />
            </svg>
          }
        />
        <ToolButton
          width="w-[66px]"
          label="think A.I."
          icon={
            <svg width="14" height="14" viewBox="0 0 14 14">
              <circle cx="7" cy="7" r="5.500" fill="none" stroke="#7f98a8" strokeWidth="2" strokeDasharray="6 2.600" />
              <circle cx="7" cy="7" r="2.500" fill="#304860" stroke="#e4ecd8" />
            </svg>
          }
        />
        <div className="ml-px flex h-[20px] w-[18px] items-center justify-center border border-[#243848] bg-black"><Dropper arrow /></div>
        <div className="ml-[2px] flex h-[20px] w-[17px] items-center justify-center border border-[#243848] bg-black">
          <svg width="14" height="14" viewBox="0 0 14 14">
            <path d="M1 13l6-6" stroke="#7f9cb0" strokeWidth="3" />
            <path d="M10 0L8 2v3l2 1h2l2-2c0 3-2 5-5 4L6 6c-1-3 1-6 4-6z" fill="#dce6d4" />
          </svg>
        </div>
        <div className="ml-[2px] flex h-[19px] w-[35px] items-center justify-center border border-[#243848] bg-black">
          <div className="flex h-[14px] w-[30px] items-center justify-center rounded-[2px] bg-gradient-to-b from-[#b8c8d4] to-[#8098ac] text-[12px] font-bold leading-none text-[#303840]">5m</div>
        </div>
        <ToolButton width="ml-px w-[48px]" label="Style" icon={<CandleIcon a="#5f8098" b="#dce6d4" />} />
        <ToolButton
          width="ml-px w-[72px]"
          label="Drawings"
          icon={
            <svg width="14" height="14" viewBox="0 0 14 14">
              <path d="M10 0l4 3-9 9-4-2z" fill="#90acc0" />
              <path d="M1 10l4 2-5 2z" fill="#e8f0d8" />
              <path d="M11 2l-8 8" stroke="#dfe8ee" />
            </svg>
          }
        />
        <ToolButton width="w-[61px]" label="Studies" icon={<Dropper />} />
        <ToolButton
          width="w-[66px]"
          label="Patterns"
          icon={
            <svg width="14" height="13" viewBox="0 0 14 13">
              <path d="M1.500 2.500v9l3-5v4l3-5v3l4-5" fill="none" stroke="#9cb8cc" strokeWidth="1.300" />
              <path d="M0 .5h14M2 12.500L13 7.500" stroke="#e4ecd8" />
            </svg>
          }
        />
        <span className="ml-[6px] w-[56px] text-[14px] font-bold tracking-[-0.1px] text-[#ffcc00]">1302.00</span>
        <span className="w-[27px] overflow-hidden whitespace-nowrap text-[9.500px] leading-[9.500px] text-[#e01020]">
          -13.40
          <br />
          -1.02%
        </span>
      </div>
    </div>
  );
}

function SideTab({ label, size, active = false }: { label: string; size: string; active?: boolean }) {
  return (
    <div
      className={`ml-[4px] flex w-[20px] shrink-0 items-center justify-center rounded-l-[8px] border border-[#151515] bg-[#2a2a2a] pr-[5px] text-[11.5px] shadow-[inset_1px_1px_0_#4a4a4a] ${size} ${
        active ? "text-[#ffcc00]" : "text-[#b4b4b4]"
      }`}
    >
      <span className="rotate-180 whitespace-nowrap [writing-mode:vertical-rl]">{label}</span>
    </div>
  );
}

const Notch = () => (
  <svg className="shrink-0" width="8" height="9" viewBox="0 0 8 9"><path d="M0 0l7 4.500L0 9z" fill="#000" stroke="#666" strokeWidth=".6" /></svg>
);

function SideTabs() {
  return (
    <aside className="flex w-[17px] shrink-0 flex-col overflow-hidden border-l border-[#666] bg-[#333]">
      <SideTab label="Trade" size="mt-[3px] h-[39px]" />
      <div className="flex h-[15px] items-center"><Notch /></div>
      <SideTab label="Times And Sales" size="h-[94px]" />
      <SideTab label="Active Trader" size="mt-[8px] h-[75px]" />
      <SideTab label="Big Buttons" size="mt-[7px] h-[66px]" />
      <SideTab label="Chart" size="mt-[8px] h-[37px]" active />
      <div className="flex h-[16px] items-center"><Notch /></div>
      <SideTab label="Dashboard" size="h-[65px]" />
      <SideTab label="Level II" size="mt-[7px] h-[47px]" />
      <SideTab label="Live News" size="mt-[6px] h-[61px]" />
    </aside>
  );
}

const Lens = ({ plus }: { plus: boolean }) => (
  <svg width="16" height="16" viewBox="0 0 16 16">
    <path d="M1 15l4-4" stroke="#a8c4d8" strokeWidth="2" />
    <circle cx="9" cy="7" r="6" fill="#48708c" stroke="#90b4cc" />
    <path d={plus ? "M5.500 7h7M9 3.500v7" : "M5.500 7h7"} stroke="#f0f4e0" strokeWidth="2" />
  </svg>
);

function BottomBar() {
  const btn = "flex h-[18px] w-[18px] items-center justify-center border border-[#34404c] bg-[#0c1014]";
  return (
    <div className="flex h-[17px] shrink-0 items-center">
      <div className="-ml-[3px] z-10 flex h-[24px] w-[15px] shrink-0 items-end justify-center self-end border border-[#555] bg-[#1a1a1a] pb-[2px]">
        <svg width="12" height="11" viewBox="0 0 12 11">
          <rect x=".5" y=".5" width="11" height="10" fill="#1a1a1a" stroke="#c0c0c0" />
          <path d="M2.500 2v7L7 5.500zM8 2h1.500v7H8z" fill="#d0d0d0" />
        </svg>
      </div>
      <div className="flex h-[18px] w-[7px] items-center overflow-hidden"><svg width="6" height="10" viewBox="0 0 6 10"><path d="M0 1l4 4-4 4" stroke="#4c7898" strokeWidth="2" fill="none" /></svg></div>
      <div className={btn}><Lens plus /></div>
      <div className={`${btn} ml-px`}><Lens plus={false} /></div>
      <div className={`${btn} ml-px flex-col text-[12px] font-bold leading-[11px] text-[#8cb8d8]`}>
        $<span className="mt-px h-[2px] w-[13px] bg-[#e8ecd8]" />
      </div>
      <div className="ml-[2px] flex h-[17px] w-[15px] items-center justify-center bg-[#262626]">
        <ChevronLeft className="size-3 fill-[#888] text-[#888]" />
      </div>
      <div className="flex h-[17px] flex-1 items-center justify-end bg-gradient-to-b from-black to-[#2e2e2e] pr-[2px]">
        <div className="h-[16px] w-[377px] bg-[repeating-linear-gradient(90deg,#123660_0_2px,#08203e_2px_3px)]" />
      </div>
      <div className="flex h-[17px] w-[16px] items-center justify-center bg-[#262626]">
        <ChevronRight className="size-3 fill-[#888] text-[#888]" />
      </div>
      <div className="ml-px flex h-[18px] w-[18px] items-center justify-center border border-[#34404c] bg-black">
        <svg width="14" height="10" viewBox="0 0 14 10"><path d="M5 0v10L0 5zM9 0v10l5-5z" fill="#e0ecd0" /><path d="M7 1v8" stroke="#6898b8" strokeWidth="2" /></svg>
      </div>
    </div>
  );
}

export default function App() {
  return (
    <div className="flex h-[968px] w-[1912px] flex-col overflow-hidden bg-black font-['Liberation_Sans',Arial,sans-serif]">
      <TopBar />
      <div className="flex min-h-0 flex-1 flex-col border-t-2 border-b border-[#0080ff]">
        <div className="ml-px border-l-2 border-[#0080ff]">
          <TitleBar />
        </div>
        <div className="flex min-h-0 flex-1">
          <main className="ml-px flex w-[1894px] shrink-0 flex-col border-l-2 border-[#0080ff]">
            <div className="flex shrink-0">
              <CellRow cells={STATUS} />
              <svg className="ml-[3px]" width="19" height="19" viewBox="0 0 19 19">
                <rect x=".5" y=".5" width="18" height="18" fill="#05080c" stroke="#34485a" />
                <path d="M3 2.500h13M3 16.500h13" stroke="#f0f0d8" />
                <path d="M3 13c5 1 6-1 7-4s2-4 6-4" fill="none" stroke="#88b8e0" strokeWidth="2" />
              </svg>
            </div>
            <div className="relative shrink-0">
              <PriceChart />
              <div className="absolute left-[899px] top-[31px] h-[91px] w-[351px] whitespace-nowrap rounded-[9px] border-[6px] border-[#ff0000] bg-white pl-[12px] pt-[8px] font-['Noto_Sans',sans-serif] text-[17px] leading-[24px] tracking-[-0.12px] text-[#f01010] shadow-[2px_2px_4px_rgba(0,0,0,.6)]">
                short around 6 am eastern time. Euro
                <br />
                session.
              </div>
            </div>
            <Splitter />
            <CellRow cells={[[44, "Volume", "text-[#b4b4b4]"], [21, "13", "text-[#b4b4b4]"]]} />
            <VolumeChart />
            <Splitter />
            <CellRow cells={OSC} />
            <OscillatorChart />
            <BottomBar />
          </main>
          <SideTabs />
        </div>
      </div>
    </div>
  );
}
